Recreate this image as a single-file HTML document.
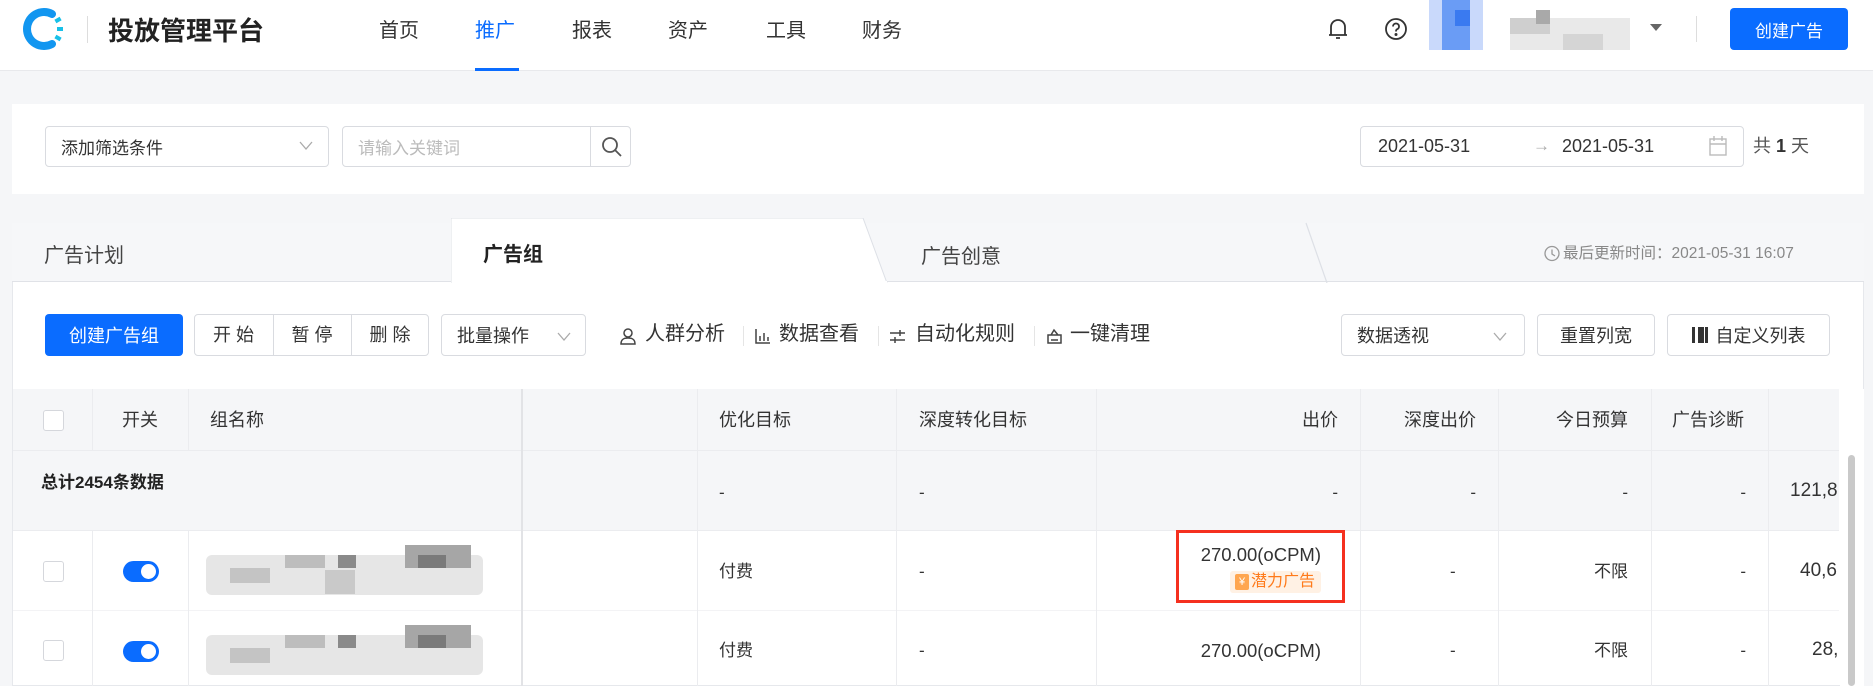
<!DOCTYPE html>
<html><head><meta charset="utf-8"><style>
*{box-sizing:border-box;margin:0;padding:0}
body{width:1873px;height:686px;overflow:hidden;background:#f5f6f8;font-family:"Liberation Sans","Noto Sans CJK SC",sans-serif;color:#333;position:relative}
.a{position:absolute}
.hdr{left:0;top:0;width:1873px;height:71px;background:#fff;border-bottom:1px solid #e8e9ec}
.nav{top:14px;font-size:20px;color:#333}
.btn{border:1px solid #d9dbe0;border-radius:4px;background:#fff;font-size:18px;color:#333;display:flex;align-items:center;justify-content:center}
.t{font-size:17px;color:#333;white-space:nowrap;line-height:22px}
.vl{width:1px;background:#ebecef}
.hl{height:1px;background:#ebecef}
</style></head><body>
<div class="a hdr"></div>
<svg class="a" style="left:22px;top:8px" width="44" height="42" viewBox="0 0 44 42">
<path d="M30 6 A17 17 0 1 0 30 36" fill="none" stroke="#1296f0" stroke-width="8" stroke-linecap="round"/>
<rect x="33" y="10" width="6" height="4" fill="#18c0e8" transform="rotate(-30 36 12)"/>
<rect x="35" y="19" width="6" height="4" fill="#18c0e8"/>
<rect x="33" y="28" width="6" height="4" fill="#18c0e8" transform="rotate(30 36 30)"/>
</svg>
<div class="a" style="left:87px;top:16px;width:1px;height:27px;background:#ddd"></div>
<div class="a" style="left:108px;top:11px;font-size:26px;font-weight:bold;color:#222">投放管理平台</div>
<div class="a nav" style="left:379px">首页</div>
<div class="a nav" style="left:475px;color:#0a6cff">推广</div>
<div class="a" style="left:475px;top:68px;width:44px;height:3px;background:#0a6cff"></div>
<div class="a nav" style="left:572px">报表</div>
<div class="a nav" style="left:668px">资产</div>
<div class="a nav" style="left:766px">工具</div>
<div class="a nav" style="left:862px">财务</div>
<svg class="a" style="left:1327px;top:17px" width="22" height="24" viewBox="0 0 22 24" fill="none" stroke="#333" stroke-width="1.8"><path d="M4 18V10a7 7 0 0 1 14 0v8zM2 18h18M9 21h4"/></svg>
<svg class="a" style="left:1384px;top:17px" width="24" height="24" viewBox="0 0 24 24" fill="none" stroke="#333" stroke-width="1.8"><circle cx="12" cy="12" r="10"/><path d="M9 9.5a3 3 0 1 1 4 2.8c-1 .4-1 1-1 2.2"/><circle cx="12" cy="17.5" r=".6" fill="#333"/></svg>
<div class="a" style="left:1429px;top:0;width:54px;height:50px;background:#c9d9fb"></div>
<div class="a" style="left:1442px;top:0;width:28px;height:50px;background:#6a9cf5"></div>
<div class="a" style="left:1455px;top:10px;width:15px;height:16px;background:#3a7af0"></div>
<div class="a" style="left:1510px;top:18px;width:120px;height:32px;background:#e9e9e9"></div>
<div class="a" style="left:1510px;top:18px;width:40px;height:16px;background:#cfcfcf"></div>
<div class="a" style="left:1536px;top:10px;width:14px;height:14px;background:#a9a9a9"></div>
<div class="a" style="left:1563px;top:34px;width:40px;height:16px;background:#d5d5d5"></div>
<div class="a" style="left:1650px;top:24px;width:0;height:0;border-left:6px solid transparent;border-right:6px solid transparent;border-top:7px solid #666"></div>
<div class="a" style="left:1696px;top:16px;width:1px;height:26px;background:#ddd"></div>
<div class="a" style="left:1730px;top:8px;width:118px;height:42px;background:#0a6cff;border-radius:4px;color:#fff;font-size:17px;display:flex;align-items:center;justify-content:center">创建广告</div>

<div class="a" style="left:12px;top:104px;width:1852px;height:90px;background:#fff"></div>
<div class="a btn" style="left:45px;top:126px;width:284px;height:41px;justify-content:flex-start;padding-left:15px;font-size:17px">添加筛选条件</div>
<svg class="a" style="left:299px;top:141px" width="14" height="10"><path d="M1 1l6 7 6-7" fill="none" stroke="#aaa" stroke-width="1.3"/></svg>
<div class="a btn" style="left:342px;top:126px;width:289px;height:41px;justify-content:flex-start;padding-left:15px;font-size:17px;color:#bbb">请输入关键词</div>
<div class="a" style="left:590px;top:127px;width:1px;height:39px;background:#d9dbe0"></div>
<svg class="a" style="left:601px;top:136px" width="22" height="22" fill="none" stroke="#555" stroke-width="1.8"><circle cx="9" cy="9" r="7"/><path d="M14 14l6 6"/></svg>
<div class="a btn" style="left:1360px;top:126px;width:384px;height:41px;justify-content:flex-start;padding-left:17px;font-size:18px">2021-05-31</div>
<div class="a t" style="left:1533px;top:135px;font-size:17px;color:#aaa">→</div>
<div class="a t" style="left:1562px;top:135px;font-size:18px">2021-05-31</div>
<svg class="a" style="left:1709px;top:136px" width="18" height="20" fill="none" stroke="#bbb" stroke-width="1.4"><rect x="1" y="3" width="16" height="16"/><path d="M1 8h16M5 0v5M13 0v5"/></svg>
<div class="a t" style="left:1753px;top:135px;font-size:18px;color:#555">共 <b style="color:#333">1</b> 天</div>

<div class="a" style="left:12px;top:223px;width:1852px;height:463px;background:#fff;border:1px solid #e6e8ec"></div>
<div class="a" style="left:12px;top:223px;width:1852px;height:59px;background:#f6f7f9;border-bottom:1px solid #e0e2e7"></div>
<svg class="a" style="left:451px;top:218px" width="880" height="65">
<path d="M0 65V0H412L436 65" fill="#fff" stroke="#dde0e6" stroke-width="1"/>
<path d="M855 5L876 65" stroke="#dde0e6" stroke-width="1.2" fill="none"/>
</svg>
<div class="a" style="left:452px;top:281px;width:435px;height:3px;background:#fff"></div>
<div class="a" style="left:44px;top:239px;font-size:20px;color:#444">广告计划</div>
<div class="a" style="left:483px;top:238px;font-size:20px;font-weight:bold;color:#222">广告组</div>
<div class="a" style="left:921px;top:240px;font-size:20px;color:#444">广告创意</div>
<svg class="a" style="left:1544px;top:245px" width="16" height="17" fill="none" stroke="#999" stroke-width="1.3"><circle cx="8" cy="8.5" r="7"/><path d="M8 4.5v4.5l3 2"/></svg>
<div class="a t" style="left:1563px;top:243px;font-size:15.5px;color:#888">最后更新时间：2021-05-31 16:07</div>

<div class="a" style="left:45px;top:314px;width:138px;height:42px;background:#0a6cff;border-radius:4px;color:#fff;font-size:18px;display:flex;align-items:center;justify-content:center">创建广告组</div>
<div class="a btn" style="left:194px;top:314px;width:235px;height:42px"></div>
<div class="a t" style="left:194px;top:324px;width:79px;text-align:center;font-size:18px">开 始</div>
<div class="a" style="left:273px;top:315px;width:1px;height:40px;background:#d9dbe0"></div>
<div class="a t" style="left:273px;top:324px;width:78px;text-align:center;font-size:18px">暂 停</div>
<div class="a" style="left:351px;top:315px;width:1px;height:40px;background:#d9dbe0"></div>
<div class="a t" style="left:351px;top:324px;width:78px;text-align:center;font-size:18px">删 除</div>
<div class="a btn" style="left:441px;top:314px;width:145px;height:42px;justify-content:flex-start;padding-left:15px">批量操作</div>
<svg class="a" style="left:557px;top:332px" width="14" height="10"><path d="M1 1l6 7 6-7" fill="none" stroke="#aaa" stroke-width="1.3"/></svg>
<svg class="a" style="left:619px;top:327px" width="18" height="18" fill="none" stroke="#444" stroke-width="1.5"><circle cx="9" cy="6" r="4"/><path d="M2 17c0-5 3-6 7-6s7 1 7 6z"/></svg>
<div class="a t" style="left:645px;top:323px;font-size:20px">人群分析</div>
<div class="a" style="left:743px;top:326px;width:1px;height:20px;background:#e5e5e5"></div>
<svg class="a" style="left:755px;top:328px" width="16" height="16" fill="none" stroke="#444" stroke-width="1.5"><path d="M1 1v14h14M5 8v5M9 5v8M13 9v4"/></svg>
<div class="a t" style="left:779px;top:323px;font-size:20px">数据查看</div>
<div class="a" style="left:878px;top:326px;width:1px;height:20px;background:#e5e5e5"></div>
<svg class="a" style="left:889px;top:329px" width="17" height="15" fill="none" stroke="#444" stroke-width="1.5"><path d="M1 4h15M1 11h15M11 1v6M6 8v6"/></svg>
<div class="a t" style="left:915px;top:323px;font-size:20px">自动化规则</div>
<div class="a" style="left:1034px;top:326px;width:1px;height:20px;background:#e5e5e5"></div>
<svg class="a" style="left:1046px;top:328px" width="17" height="16" fill="none" stroke="#444" stroke-width="1.5"><path d="M2 7h13v8H2zM5 7l3-5 4 5M5 12h7"/></svg>
<div class="a t" style="left:1070px;top:323px;font-size:20px">一键清理</div>
<div class="a btn" style="left:1341px;top:314px;width:184px;height:42px;justify-content:flex-start;padding-left:15px">数据透视</div>
<svg class="a" style="left:1493px;top:332px" width="14" height="10"><path d="M1 1l6 7 6-7" fill="none" stroke="#aaa" stroke-width="1.3"/></svg>
<div class="a btn" style="left:1537px;top:314px;width:118px;height:42px">重置列宽</div>
<div class="a btn" style="left:1667px;top:314px;width:163px;height:42px"><span style="display:inline-block;width:16px;height:16px;border-left:3px solid #333;border-right:3px solid #333;position:relative;margin-right:8px"><i style="position:absolute;left:3px;top:0;width:4px;height:16px;border-left:3px solid #333;border-right:3px solid #333"></i></span>自定义列表</div>

<div class="a" style="left:13px;top:389px;width:1826px;height:141px;background:#f5f6f8"></div>
<div class="a hl" style="left:13px;top:450px;width:1826px"></div>
<div class="a hl" style="left:13px;top:530px;width:1826px"></div>
<div class="a hl" style="left:13px;top:610px;width:1826px;background:#f3f3f5"></div>
<div class="a vl" style="left:92px;top:389px;height:61px"></div>
<div class="a vl" style="left:188px;top:389px;height:61px"></div>
<div class="a vl" style="left:92px;top:530px;height:156px"></div>
<div class="a vl" style="left:188px;top:530px;height:156px"></div>
<div class="a" style="left:521px;top:389px;width:2px;height:297px;background:#e2e3e6"></div>
<div class="a vl" style="left:697px;top:389px;height:297px"></div>
<div class="a vl" style="left:896px;top:389px;height:297px"></div>
<div class="a vl" style="left:1096px;top:389px;height:297px"></div>
<div class="a vl" style="left:1360px;top:389px;height:297px"></div>
<div class="a vl" style="left:1498px;top:389px;height:297px"></div>
<div class="a vl" style="left:1651px;top:389px;height:297px"></div>
<div class="a vl" style="left:1768px;top:389px;height:297px"></div>
<div class="a" style="left:1840px;top:389px;width:24px;height:297px;background:#fff"></div>
<div class="a" style="left:1848px;top:455px;width:7px;height:231px;background:#c9c9c9;border-radius:4px"></div>
<div class="a" style="left:43px;top:410px;width:21px;height:21px;border:1px solid #d5d7dc;border-radius:3px;background:#fff"></div>
<div class="a t" style="left:122px;top:409px;font-size:18px">开关</div>
<div class="a t" style="left:210px;top:409px;font-size:18px">组名称</div>
<div class="a t" style="left:719px;top:409px;font-size:18px">优化目标</div>
<div class="a t" style="left:919px;top:409px;font-size:18px">深度转化目标</div>
<div class="a t" style="left:1200px;top:409px;width:138px;text-align:right;font-size:18px">出价</div>
<div class="a t" style="left:1380px;top:409px;width:96px;text-align:right;font-size:18px">深度出价</div>
<div class="a t" style="left:1520px;top:409px;width:108px;text-align:right;font-size:18px">今日预算</div>
<div class="a t" style="left:1672px;top:409px;font-size:18px">广告诊断</div>
<div class="a t" style="left:41px;top:472px;font-size:17px;font-weight:bold;color:#222">总计2454条数据</div>
<div class="a t" style="left:719px;top:482px">-</div>
<div class="a t" style="left:919px;top:482px">-</div>
<div class="a t" style="left:1300px;top:482px;width:38px;text-align:right">-</div>
<div class="a t" style="left:1440px;top:482px;width:36px;text-align:right">-</div>
<div class="a t" style="left:1590px;top:482px;width:38px;text-align:right">-</div>
<div class="a t" style="left:1700px;top:482px;width:46px;text-align:right">-</div>
<div class="a t" style="left:1790px;top:480px;font-size:19px">121,8</div>
<div class="a" style="left:43px;top:561px;width:21px;height:21px;border:1px solid #d5d7dc;border-radius:3px"></div>
<div class="a" style="left:123px;top:561px;width:36px;height:21px;border-radius:11px;background:#0a6cff"><div style="position:absolute;right:3px;top:3px;width:15px;height:15px;border-radius:50%;background:#fff"></div></div>
<div class="a" style="left:206px;top:555px;width:277px;height:40px;background:#e6e6e6;border-radius:6px"></div>
<div class="a" style="left:285px;top:555px;width:40px;height:13px;background:#bdbdbd"></div>
<div class="a" style="left:338px;top:555px;width:18px;height:13px;background:#8a8a8a"></div>
<div class="a" style="left:405px;top:545px;width:66px;height:23px;background:#a6a6a6"></div>
<div class="a" style="left:418px;top:555px;width:28px;height:13px;background:#7a7a7a"></div>
<div class="a" style="left:230px;top:568px;width:40px;height:15px;background:#c4c4c4"></div>
<div class="a" style="left:325px;top:570px;width:30px;height:24px;background:#c9c9c9"></div>
<div class="a t" style="left:719px;top:561px">付费</div>
<div class="a t" style="left:919px;top:561px">-</div>
<div class="a" style="left:1176px;top:530px;width:169px;height:73px;border:3px solid #f5301f"></div>
<div class="a t" style="left:1150px;top:544px;width:171px;text-align:right;font-size:18.5px">270.00(oCPM)</div>
<div class="a" style="left:1230px;top:571px;width:91px;height:22px;background:#fff1e4;border-radius:3px"></div>
<div class="a" style="left:1235px;top:574px;width:14px;height:16px;background:#ffa650;border-radius:2px;color:#fff;font-size:11px;text-align:center;line-height:16px">¥</div>
<div class="a t" style="left:1251px;top:571px;font-size:16px;color:#ff7a1a">潜力广告</div>
<div class="a t" style="left:1450px;top:561px;width:10px">-</div>
<div class="a t" style="left:1590px;top:561px;width:38px;text-align:right">不限</div>
<div class="a t" style="left:1700px;top:561px;width:46px;text-align:right">-</div>
<div class="a t" style="left:1800px;top:560px;font-size:19px">40,6</div>
<div class="a" style="left:43px;top:640px;width:21px;height:21px;border:1px solid #d5d7dc;border-radius:3px"></div>
<div class="a" style="left:123px;top:641px;width:36px;height:21px;border-radius:11px;background:#0a6cff"><div style="position:absolute;right:3px;top:3px;width:15px;height:15px;border-radius:50%;background:#fff"></div></div>
<div class="a" style="left:206px;top:635px;width:277px;height:40px;background:#e6e6e6;border-radius:6px"></div>
<div class="a" style="left:285px;top:635px;width:40px;height:13px;background:#bdbdbd"></div>
<div class="a" style="left:338px;top:635px;width:18px;height:13px;background:#8a8a8a"></div>
<div class="a" style="left:405px;top:625px;width:66px;height:23px;background:#a6a6a6"></div>
<div class="a" style="left:418px;top:635px;width:28px;height:13px;background:#7a7a7a"></div>
<div class="a" style="left:230px;top:648px;width:40px;height:15px;background:#c4c4c4"></div>
<div class="a t" style="left:719px;top:640px">付费</div>
<div class="a t" style="left:919px;top:640px">-</div>
<div class="a t" style="left:1150px;top:640px;width:171px;text-align:right;font-size:18.5px">270.00(oCPM)</div>
<div class="a t" style="left:1450px;top:640px;width:10px">-</div>
<div class="a t" style="left:1590px;top:640px;width:38px;text-align:right">不限</div>
<div class="a t" style="left:1700px;top:640px;width:46px;text-align:right">-</div>
<div class="a t" style="left:1812px;top:639px;font-size:19px">28,</div>
</body></html>
